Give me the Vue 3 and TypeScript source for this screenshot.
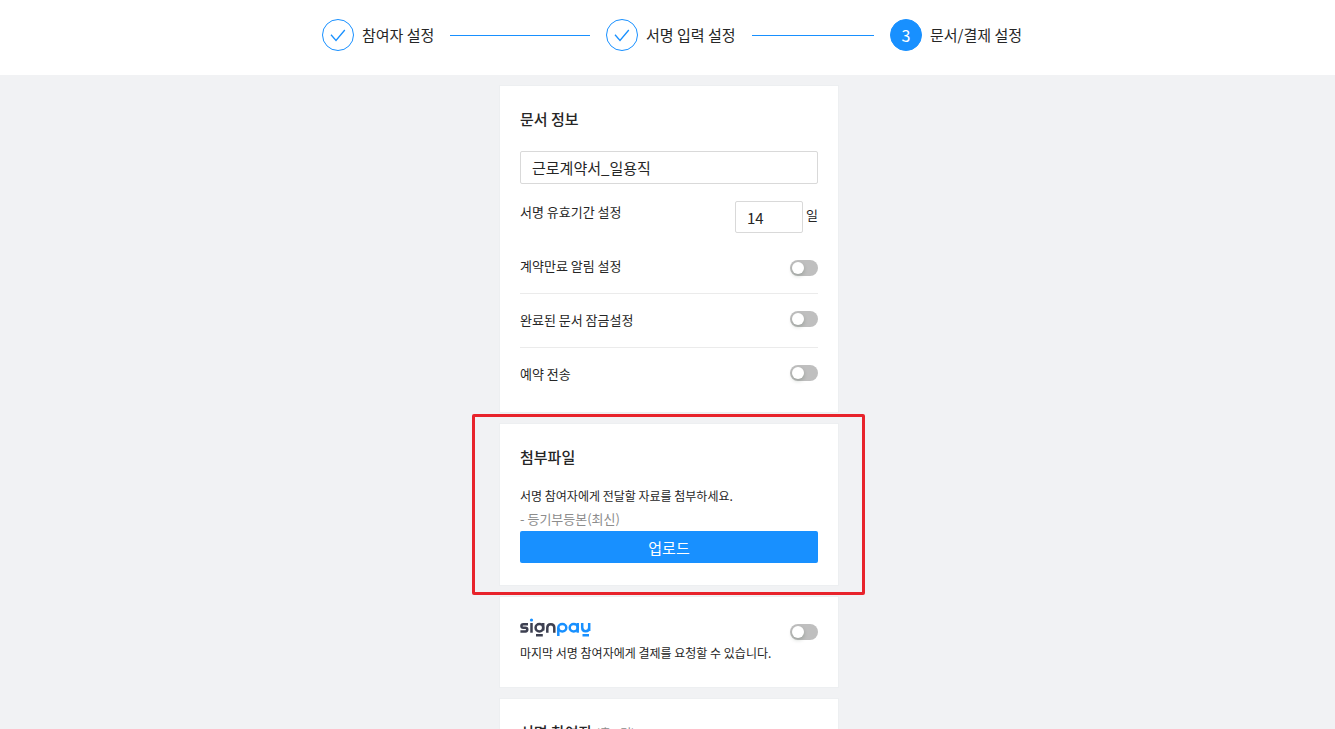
<script setup lang="ts">
import { ref } from 'vue'

const steps = [
  { title: '참여자 설정', done: true },
  { title: '서명 입력 설정', done: true },
  { title: '문서/결제 설정', done: false },
]
const documentName = ref('근로계약서_일용직')
const validDays = ref('14')
const options = ref([
  { id: 'expiry', label: '계약만료 알림 설정', on: false },
  { id: 'lock', label: '완료된 문서 잠금설정', on: false },
  { id: 'reserve', label: '예약 전송', on: false },
])
const payEnabled = ref(false)
</script>

<template>
  <div class="page">
    <header class="header">
      <ol class="steps">
        <li v-for="(step, i) in steps" :key="step.title" class="step">
          <span class="step-icon" :class="{ current: !step.done }">
            <svg v-if="step.done" width="16" height="16" viewBox="0 0 16 16" aria-hidden="true">
              <path d="M1 7.8 6 13.4 14.8 3" fill="none" stroke="#1890ff" stroke-width="1.3" />
            </svg>
            <template v-else>{{ i + 1 }}</template>
          </span>
          <span class="step-title">{{ step.title }}</span>
          <span v-if="i < steps.length - 1" class="step-line"></span>
        </li>
      </ol>
    </header>

    <main class="content">
      <section class="card info">
        <h2>문서 정보</h2>
        <input v-model="documentName" class="field" type="text" aria-label="문서 이름" />
        <div class="row period">
          <label for="days">서명 유효기간 설정</label>
          <span class="days"><input id="days" v-model="validDays" class="field" type="text" /><span>일</span></span>
        </div>
        <div v-for="option in options" :key="option.id" class="row option">
          <label :for="option.id">{{ option.label }}</label>
          <input :id="option.id" v-model="option.on" class="switch" type="checkbox" role="switch" />
        </div>
      </section>

      <section class="card attach">
        <h2>첨부파일</h2>
        <p class="desc">서명 참여자에게 전달할 자료를 첨부하세요.</p>
        <p class="file">- 등기부등본(최신)</p>
        <button type="button" class="upload">업로드</button>
        <span class="highlight"></span>
      </section>

      <section class="card pay">
        <div class="pay-text">
          <svg class="logo" width="71" height="20" viewBox="0 0 71 20" role="img" aria-label="signpay">
            <g fill="none" stroke="#3d4051" stroke-width="2.5">
              <path d="M8 6.2H3.4Q1.4 6.2 1.4 8T3.4 9.8H5.4Q7.3 9.8 7.3 11.6T5.4 13.5H.4" />
              <path d="M11.5 5V14.7" />
              <ellipse cx="19.4" cy="9.8" rx="3.8" ry="3.7" />
              <path d="M23.2 5V12.5M16 17.2H22.8" />
              <path d="M27.3 14.7V9.7Q27.3 6.2 30.8 6.2T34.3 9.7V14.7" />
            </g>
            <g fill="none" stroke="#1890ff" stroke-width="2.5">
              <path d="M38.3 18V9.8" />
              <ellipse cx="42.3" cy="9.8" rx="4" ry="3.7" />
              <ellipse cx="53.7" cy="9.8" rx="4" ry="3.7" />
              <path d="M57.7 5V14.7" />
              <path d="M62.2 5V9.5Q62.2 13.2 65.7 13.2T69.2 9.5V5M69.2 9V13M62.5 17.2H69" />
            </g>
            <circle cx="11.5" cy="2" r="1.6" fill="#1890ff" />
          </svg>
          <label class="desc" for="pay">마지막 서명 참여자에게 결제를 요청할 수 있습니다.</label>
        </div>
        <input id="pay" v-model="payEnabled" class="switch" type="checkbox" role="switch" />
      </section>

      <section class="card">
        <h2>서명 참여자 <small>(총 2명)</small></h2>
      </section>
    </main>
  </div>
</template>

<style>
body {
  margin: 0;
}
</style>

<style scoped>
* {
  box-sizing: border-box;
}
.page {
  height: 100vh;
  overflow: hidden;
  background: #f1f2f4;
  color: #262626;
  font-family: "Noto Sans CJK KR", "Noto Sans", sans-serif;
  font-size: 13px;
  line-height: 20px;
}
.header {
  display: flex;
  justify-content: center;
  padding: 19px 0 24px 9px;
  background: #fff;
}
.steps {
  display: flex;
  width: 100%;
  max-width: 700px;
  margin: 0;
  padding: 0;
  list-style: none;
}
.step {
  display: flex;
  flex: 1;
  align-items: center;
  font-size: 15px;
  line-height: 32px;
  white-space: nowrap;
}
.step:last-child {
  flex: none;
}
.step-icon {
  display: flex;
  align-items: center;
  justify-content: center;
  width: 32px;
  height: 32px;
  margin-right: 8px;
  border: 1px solid #1890ff;
  border-radius: 50%;
}
.step-icon.current {
  background: #1890ff;
  color: #fff;
  font-size: 16px;
}
.step-line {
  flex: 1;
  height: 1px;
  margin: 0 16px;
  background: #1890ff;
}
.content {
  display: flex;
  flex-direction: column;
  align-items: center;
  gap: 12px;
  padding: 11px 0 0 3px;
}
.card {
  position: relative;
  width: 100%;
  max-width: 338px;
  padding: 21px 20px 22px;
  background: #fff;
  box-shadow: 0 0 0 1px #edeff1;
}
h2 {
  margin: 0;
  font-size: 15px;
  font-weight: 500;
  line-height: 24px;
}
h2 small {
  color: #8c8c8c;
  font-size: 12px;
  font-weight: 400;
}
.field {
  display: block;
  width: 100%;
  height: 32px;
  padding: 0 11px;
  border: 1px solid #d9d9d9;
  border-radius: 2px;
  background: #fff;
  color: #262626;
  font: inherit;
  font-size: 15px;
}
.row {
  display: flex;
  justify-content: space-between;
}
.info {
  padding-bottom: 11px;
}
.info > .field {
  height: 33px;
  margin-top: 20px;
}
.period {
  height: 55px;
  padding-top: 17px;
}
.period label {
  margin-top: 1px;
}
.days {
  display: flex;
  gap: 3px;
  line-height: 28px;
}
.days .field {
  width: 68px;
}
.option {
  align-items: center;
  height: 54px;
}
.option + .option {
  border-top: 1px solid #ebebeb;
}
.option label {
  margin-bottom: 1px;
}
.option + .option .switch {
  margin-bottom: 4px;
}
.option:nth-child(4) .switch {
  margin-top: 3px;
}
.switch {
  flex: none;
  appearance: none;
  width: 28px;
  height: 16px;
  margin: 0;
  padding: 2px;
  border-radius: 8px;
  background: #bfbfbf;
}
.switch::before {
  content: "";
  display: block;
  width: 12px;
  height: 12px;
  border-radius: 50%;
  background: #fff;
  box-shadow: 0 2px 4px rgba(0, 35, 11, 0.2);
}
.switch:checked {
  background: #1890ff;
}
.switch:checked::before {
  margin-left: 12px;
}
.desc,
.file {
  margin: 0;
  font-size: 12px;
  line-height: 24px;
}
.attach .desc {
  margin-top: 15px;
}
.file {
  color: #8c8c8c;
  font-size: 13px;
  line-height: 22px;
}
.upload {
  display: block;
  width: 100%;
  height: 32px;
  margin-top: 1px;
  padding: 2px 0 0;
  border: 0;
  border-radius: 2px;
  background: #1890ff;
  color: #fff;
  font: inherit;
  font-size: 15px;
}
.highlight {
  position: absolute;
  z-index: 1;
  inset: -10px -27px -10px -28px;
  border: 3px solid #e8232b;
  border-radius: 2px;
  pointer-events: none;
}
.pay {
  display: flex;
  align-items: flex-start;
  justify-content: space-between;
}
.pay-text {
  display: flex;
  flex-direction: column;
  gap: 3px;
}
.pay .switch {
  margin-top: 6px;
}
</style>
